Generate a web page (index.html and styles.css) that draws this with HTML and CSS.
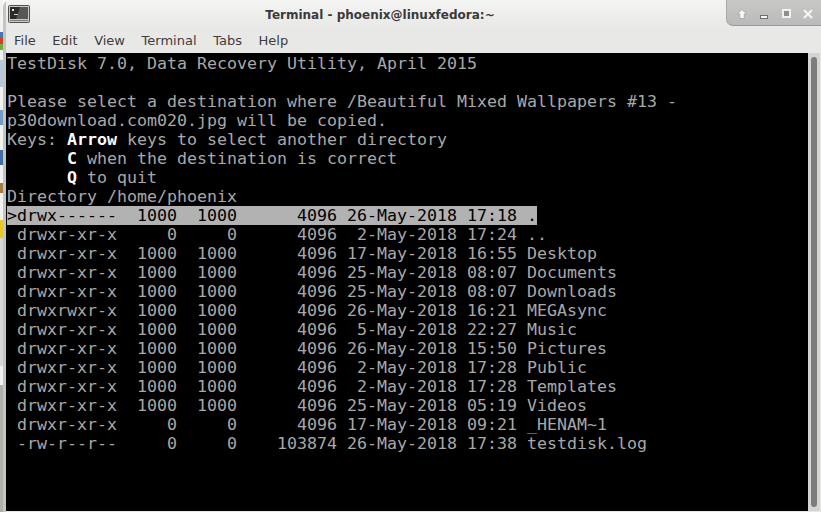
FILE: index.html
```html
<!DOCTYPE html>
<html lang="en">
<head>
<meta charset="utf-8">
<title>Terminal - phoenix@linuxfedora:~</title>
<link rel="stylesheet" href="styles.css">
</head>
<body>
<div class="desktop">
  <div class="strip">
    <span class="bit bit-white h32"></span>
    <span class="bit bit-blue"></span>
    <span class="bit bit-red"></span>
    <span class="bit bit-green"></span>
    <span class="bit bit-white h10"></span>
    <span class="bit bit-pale"></span>
    <span class="bit bit-white h23"></span>
    <span class="bit bit-sky"></span>
    <span class="bit bit-white h25"></span>
    <span class="bit bit-navy"></span>
    <span class="bit bit-white h18"></span>
    <span class="bit bit-brown"></span>
    <span class="bit bit-white h27"></span>
    <span class="bit bit-yellow"></span>
    <span class="bit bit-grey"></span>
    <span class="bit bit-light"></span>
    <span class="bit bit-dark"></span>
  </div>
  <div class="window">
    <header class="titlebar">
      <svg class="app-icon" width="22" height="18" viewBox="0 0 22 18">
        <rect x="0.5" y="0.500" width="21" height="17" rx="1" fill="#c9cac6" stroke="#4f514c"/>
        <rect x="2" y="2" width="18" height="12" fill="#2a2c2a"/>
        <path d="M12 2H20V14H8Z" fill="#565856"/>
        <rect x="4" y="4" width="2" height="2" fill="#e8e8e8"/>
        <rect x="6" y="9" width="4" height="1" fill="#d0d0d0"/>
        <rect x="2" y="15" width="18" height="1" fill="#7d7f7a"/>
      </svg>
      <span class="title">Terminal - phoenix@linuxfedora:~</span>
      <div class="controls">
        <span class="ctl"><svg width="10" height="10" viewBox="0 0 10 10"><path d="M5 .5 9.500 5H7.200V9.500H2.800V5H.5Z" fill="#f6f6f6" stroke="#8a8a8a" stroke-width=".5"/></svg></span>
        <span class="ctl ctl-min"><svg width="8" height="4" viewBox="0 0 8 4"><rect x=".5" y=".5" width="7" height="3" fill="#f4f4f4" stroke="#6e6e6e"/></svg></span>
        <span class="ctl"><svg width="9" height="9" viewBox="0 0 9 9"><rect x=".5" y=".5" width="8" height="8" fill="#8f8f8e" stroke="#f2f2f2"/><rect x="1.500" y="1.500" width="6" height="6" fill="none" stroke="#efefef"/></svg></span>
        <span class="ctl"><svg width="10" height="10" viewBox="0 0 10 10"><path d="M1 1 9 9M9 1 1 9" stroke="#f4f4f4" stroke-width="2.200"/></svg></span>
      </div>
    </header>
    <nav class="menubar">
      <span>File</span><span>Edit</span><span>View</span><span>Terminal</span><span>Tabs</span><span>Help</span>
    </nav>
    <div class="content">
<pre class="terminal">TestDisk 7.0, Data Recovery Utility, April 2015

Please select a destination where /Beautiful Mixed Wallpapers #13 -
p30download.com020.jpg will be copied.
Keys: <b>Arrow</b> keys to select another directory
      <b>C</b> when the destination is correct
      <b>Q</b> to quit
Directory /home/phoenix
<span class="sel">&gt;drwx------  1000  1000      4096 26-May-2018 17:18 .</span>
 drwxr-xr-x     0     0      4096  2-May-2018 17:24 ..
 drwxr-xr-x  1000  1000      4096 17-May-2018 16:55 Desktop
 drwxr-xr-x  1000  1000      4096 25-May-2018 08:07 Documents
 drwxr-xr-x  1000  1000      4096 25-May-2018 08:07 Downloads
 drwxrwxr-x  1000  1000      4096 26-May-2018 16:21 MEGAsync
 drwxr-xr-x  1000  1000      4096  5-May-2018 22:27 Music
 drwxr-xr-x  1000  1000      4096 26-May-2018 15:50 Pictures
 drwxr-xr-x  1000  1000      4096  2-May-2018 17:28 Public
 drwxr-xr-x  1000  1000      4096  2-May-2018 17:28 Templates
 drwxr-xr-x  1000  1000      4096 25-May-2018 05:19 Videos
 drwxr-xr-x     0     0      4096 17-May-2018 09:21 _HENAM~1
 -rw-r--r--     0     0    103874 26-May-2018 17:38 testdisk.log</pre>
      <div class="scrollbar"><div class="thumb"></div></div>
    </div>
  </div>
</div>
</body>
</html>
```
FILE: styles.css
```css
* { box-sizing: border-box; }
html, body { margin: 0; padding: 0; }
body { width: 821px; height: 512px; overflow: hidden; background: #fff; }
.desktop { display: flex; height: 512px; }
.strip { width: 3px; flex: none; display: flex; flex-direction: column; }
.bit { display: block; width: 3px; flex: none; }
.bit-white { background: #f2f2f0; }
.h10 { height: 10px; }
.h18 { height: 18px; }
.h23 { height: 23px; }
.h25 { height: 25px; }
.h27 { height: 27px; }
.h32 { height: 32px; }
.bit-blue { height: 6px; background: #3f78b8; }
.bit-red { height: 6px; background: #e03a20; }
.bit-green { height: 6px; background: #6cae2e; }
.bit-pale { height: 27px; background: #b9c8d8; }
.bit-sky { height: 15px; background: #6f9cc8; }
.bit-navy { height: 15px; background: #3f6fa6; }
.bit-brown { height: 10px; background: #a87a3c; }
.bit-yellow { height: 18px; background: #e8c820; }
.bit-grey { height: 128px; background: #d6d6d4; }
.bit-light { height: 19px; background: #f2f2f2; }
.bit-dark { flex: 1; background: #aeb0ac; }
.window {
  flex: 1; min-width: 0; height: 512px; display: flex; flex-direction: column;
  background: #e8e8e7; border-left: 3px solid #c4c4c2; border-right: 0;
  border-top-left-radius: 7px;
}
.titlebar {
  height: 29px; flex: none; display: flex; align-items: flex-start;
  background: linear-gradient(#f4f4f3, #e8e8e7);
  padding-left: 2px;
}
.app-icon { flex: none; margin-top: 5px; }
.title {
  flex: 1; min-width: 0; text-align: center; padding: 7px 0 0 4px;
  font: bold 12px/16px "DejaVu Sans", sans-serif; color: #3a3a3a; white-space: nowrap;
}
.controls {
  flex: none; width: 95px; height: 26px;
  display: flex; align-items: center; padding: 2px 0 0 4px;
  background: linear-gradient(#c8c8c7, #bababa);
  border-bottom: 1px solid #9a9a99; border-left: 1px solid #a8a8a7;
  border-bottom-left-radius: 7px;
}
.ctl { width: 22px; flex: none; display: flex; justify-content: center; }
.ctl-min { padding-top: 7px; }
.menubar {
  height: 24px; flex: none; display: flex; align-items: center; gap: 16.6px; padding: 0 0 0 8px;
  font: 13px/16px "DejaVu Sans", sans-serif; color: #3c3c3c;
}
.content { flex: 1; min-height: 0; display: flex; background: #000; margin-bottom: 1px; }
.terminal {
  flex: 1; min-width: 0; margin: 0; padding: 1px 0 0 1px; background: #000; color: #a8a8a8;
  font: 16.61px/19px "DejaVu Sans Mono", monospace; overflow: hidden;
}
.terminal b { color: #fff; font-weight: bold; }
.sel { display: inline-block; background: #b2b2b2; color: #000; height: 19px; vertical-align: top; }
.scrollbar { width: 13px; flex: none; background: #d4d4d3; padding: 4px 3px; border-right: 1px solid #e8e8e7; }
.thumb { width: 6px; height: 100%; background: #7c7e7d; border-radius: 3px; }
```
